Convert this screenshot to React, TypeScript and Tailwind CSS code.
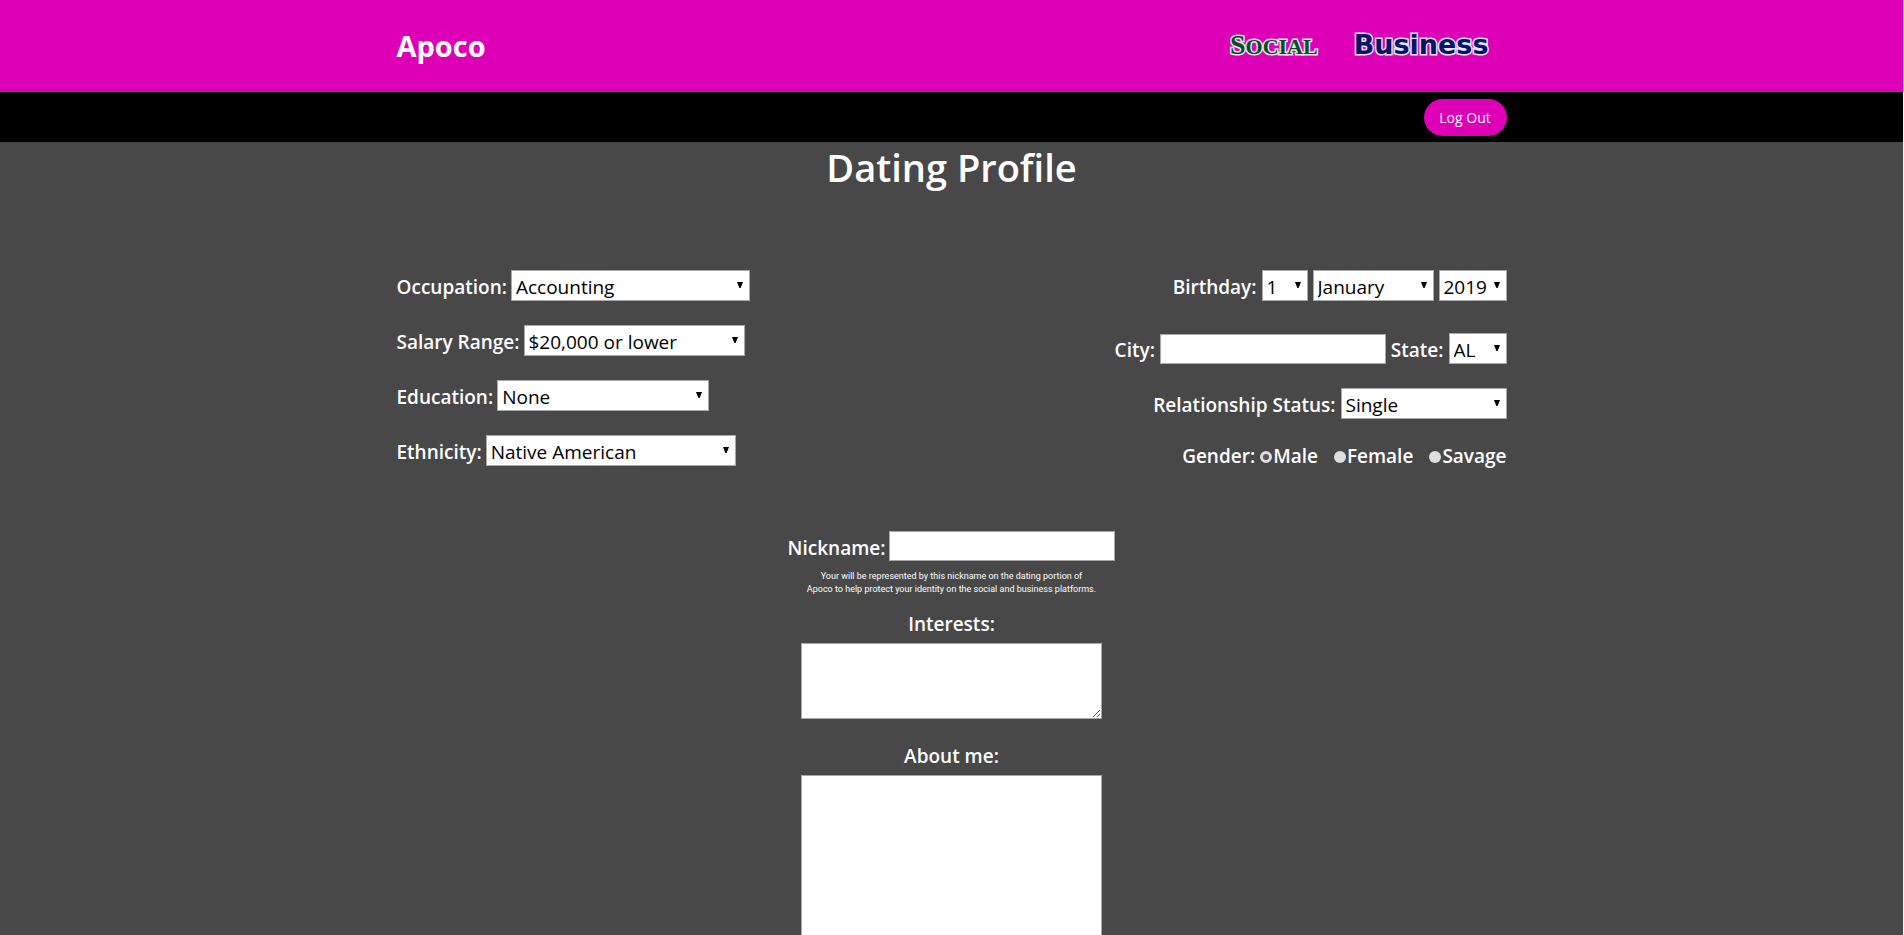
import React from "react";

type SelectProps = {
  id: string;
  options: string[];
  width: string;
  ariaLabel?: string;
};

function Select({ id, options, width, ariaLabel }: SelectProps) {
  return (
    <span className={`relative block h-[31px] ${width}`}>
      <select
        id={id}
        name={id}
        aria-label={ariaLabel}
        className="block h-full w-full appearance-none border border-[#a9a9a9] bg-white pt-[3px] pl-1 font-['Open_Sans',sans-serif] text-[19px] leading-[26px] font-normal text-black"
      >
        {options.map((option) => (
          <option key={option}>{option}</option>
        ))}
      </select>
      <svg
        viewBox="0 0 6 6"
        className="pointer-events-none absolute top-3 right-[7px] size-[6px]"
        aria-hidden="true"
      >
        <path d="M0 0h6L3.6 6H2.4z" fill="#000" />
      </svg>
    </span>
  );
}

function FieldLabel({ htmlFor, children }: { htmlFor: string; children: React.ReactNode }) {
  return (
    <label htmlFor={htmlFor} className="pt-[2px] whitespace-nowrap">
      {children}
    </label>
  );
}

function TextInput({ id, className = "" }: { id: string; className?: string }) {
  return (
    <input
      id={id}
      name={id}
      type="text"
      className={`h-[30px] w-[226px] border border-[#a9a9a9] bg-white px-1 text-[19px] font-normal text-black ${className}`}
    />
  );
}

function Radio({ label, checked }: { label: string; checked?: boolean }) {
  return (
    <label className="flex items-center gap-px">
      <input
        type="radio"
        name="gender"
        defaultChecked={checked}
        className="size-3 appearance-none rounded-full bg-[#dedede] checked:border-[3px] checked:border-[#dedede] checked:bg-[#555]"
      />
      {label}
    </label>
  );
}

const occupations = ["Accounting", "Education", "Engineering", "Healthcare"];
const salaries = ["$20,000 or lower", "$20,000 - $40,000", "$40,000 or higher"];
const education = ["None", "High School", "College"];
const ethnicities = ["Native American", "Asian", "Black", "Hispanic", "White"];
const days = Array.from({ length: 31 }, (_, i) => String(i + 1));
const months = [
  "January", "February", "March", "April", "May", "June",
  "July", "August", "September", "October", "November", "December",
];
const years = Array.from({ length: 100 }, (_, i) => String(2019 - i));
const states = ["AL", "AK", "AZ", "AR", "CA", "CO", "NY", "TX"];

const container = "mx-auto w-full max-w-[1140px] px-[15px]";

export default function App() {
  return (
    <div className="min-h-screen border-r border-[#f1f1f1] bg-[#484848] font-['Open_Sans',sans-serif] text-white">
      <header className="bg-[#dd00b7]">
        <div className={`${container} flex h-[92px] items-center justify-between`}>
          <a href="#" className="text-[29px] leading-10 font-bold">
            Apoco
          </a>
          <nav className="flex items-center gap-[36px] pr-[18px]">
            <a
              href="#social"
              className="font-['Liberation_Serif',serif] text-[28px] leading-9 font-bold text-[#00501e] [-webkit-text-stroke:3px_#e8e4e8] [paint-order:stroke_fill]"
            >
              S<span className="text-[22px]">OCIAL</span>
            </a>
            <a
              href="#business"
              className="pb-[2px] font-['DejaVu_Sans',sans-serif] text-[27px] leading-9 font-bold text-[#06146e] [-webkit-text-stroke:3px_#e8e4f4] [paint-order:stroke_fill]"
            >
              Business
            </a>
          </nav>
        </div>
      </header>

      <div className="bg-black">
        <div className={`${container} flex h-[50px] items-center justify-end`}>
          <button
            type="button"
            className="h-[37px] w-[83px] rounded-full bg-[#dd00b7] pt-px text-[14px]"
          >
            Log Out
          </button>
        </div>
      </div>

      <main className={container}>
        <h1 className="pt-px text-center text-[38px] leading-[48px] font-semibold">Dating Profile</h1>

        <form className="pt-[79px] text-[19px] leading-[31px] font-semibold">
          <div className="flex justify-between">
            <div className="flex flex-col gap-[22px]">
              <div className="flex gap-1">
                <FieldLabel htmlFor="occupation">Occupation:</FieldLabel>
                <Select id="occupation" options={occupations} width="w-[239px]" />
              </div>
              <div className="flex gap-1">
                <FieldLabel htmlFor="salary">Salary Range:</FieldLabel>
                <Select id="salary" options={salaries} width="w-[221px]" />
              </div>
              <div className="flex gap-1">
                <FieldLabel htmlFor="education">Education:</FieldLabel>
                <Select id="education" options={education} width="w-[212px]" />
              </div>
              <div className="flex gap-1">
                <FieldLabel htmlFor="ethnicity">Ethnicity:</FieldLabel>
                <Select id="ethnicity" options={ethnicities} width="w-[250px]" />
              </div>
            </div>

            <div className="flex flex-col items-end gap-[22px]">
              <div className="mb-2 flex gap-[5px]">
                <FieldLabel htmlFor="day">Birthday:</FieldLabel>
                <Select id="day" options={days} width="w-[46px]" />
                <Select id="month" options={months} width="w-[121px]" ariaLabel="Month" />
                <Select id="year" options={years} width="w-[68px]" ariaLabel="Year" />
              </div>
              <div className="flex gap-[5px]">
                <FieldLabel htmlFor="city">City:</FieldLabel>
                <TextInput id="city" className="mt-px" />
                <FieldLabel htmlFor="state">State:</FieldLabel>
                <Select id="state" options={states} width="w-[58px]" />
              </div>
              <div className="flex gap-[5px]">
                <FieldLabel htmlFor="relationship">Relationship Status:</FieldLabel>
                <Select
                  id="relationship"
                  options={["Single", "Married", "Divorced", "Widowed"]}
                  width="w-[166px]"
                />
              </div>
              <div role="radiogroup" aria-labelledby="gender-label" className="-mt-1 flex gap-4 pt-[2px]">
                <div className="flex gap-[5px]">
                  <span id="gender-label">Gender:</span>
                  <Radio label="Male" checked />
                </div>
                <Radio label="Female" />
                <Radio label="Savage" />
              </div>
            </div>
          </div>

          <div className="flex flex-col items-center pt-[59px]">
            <div className="flex gap-1">
              <FieldLabel htmlFor="nickname">Nickname:</FieldLabel>
              <TextInput id="nickname" />
            </div>
            <p className="pt-[6px] text-center font-[Roboto,sans-serif] text-[9px] leading-[13px] font-normal">
              Your will be represented by this nickname on the dating portion of
              <br />
              Apoco to help protect your identity on the social and business platforms.
            </p>
            <label htmlFor="interests" className="pt-[13px]">
              Interests:
            </label>
            <textarea
              id="interests"
              name="interests"
              className="mt-[3px] h-[76px] w-[301px] resize border border-[#a9a9a9] bg-white p-1 font-normal text-black"
            />
            <label htmlFor="about" className="pt-[22px]">
              About me:
            </label>
            <textarea
              id="about"
              name="about"
              className="mt-[3px] h-[226px] w-[301px] resize border border-[#a9a9a9] bg-white p-1 font-normal text-black"
            />
          </div>
        </form>
      </main>
    </div>
  );
}
